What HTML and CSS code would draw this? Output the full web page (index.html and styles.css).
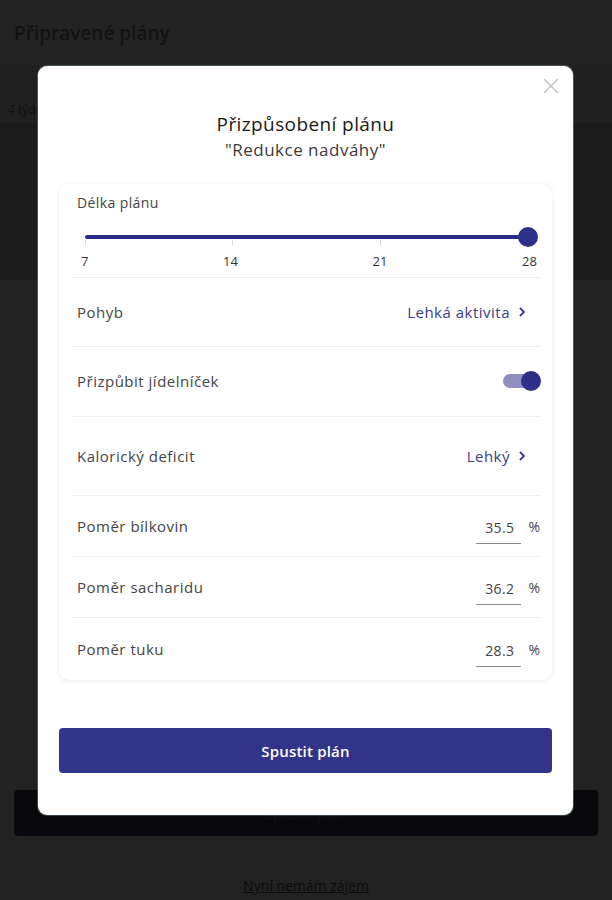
FILE: index.html
```html
<!DOCTYPE html>
<html lang="cs">
<head>
<meta charset="utf-8">
<title>Přizpůsobení plánu</title>
<link rel="stylesheet" href="styles.css">
</head>
<body>
<div class="page">
  <header class="topbar"><h1 class="page-title">Připravené plány</h1></header>
  <div class="tabs"><span class="tab">4 týdny</span></div>
  <div class="hero"></div>
  <main class="content"></main>
  <div class="bottom">
    <div class="dark-btn">Spustit plán</div>
    <a class="link" href="#">Nyní nemám zájem</a>
  </div>
</div>

<div class="modal">
  <button class="close" aria-label="Zavřít">
    <svg width="16" height="16" viewBox="0 0 16 16"><path d="M1 1L15 15M15 1L1 15" stroke="#c4c4c4" stroke-width="1.6" fill="none"/></svg>
  </button>
  <h2 class="modal-title">Přizpůsobení plánu</h2>
  <p class="modal-sub">"Redukce nadváhy"</p>

  <section class="card">
    <div class="slider-block">
      <div class="slider-label">Délka plánu</div>
      <div class="slider">
        <div class="track"></div>
        <div class="ticks">
          <span class="tick"></span><span class="tick"></span><span class="tick"></span><span class="tick"></span>
        </div>
        <div class="thumb"></div>
      </div>
      <div class="slider-values"><span>7</span><span>14</span><span>21</span><span>28</span></div>
    </div>

    <div class="row r-pohyb">
      <span class="label">Pohyb</span>
      <span class="value">Lehká aktivita
        <svg class="chev" width="8" height="12" viewBox="0 0 8 12"><path d="M2 2L6 6L2 10" stroke="#3b3b8e" stroke-width="1.8" fill="none"/></svg>
      </span>
    </div>
    <div class="row r-toggle">
      <span class="label">Přizpůbit jídelníček</span>
      <span class="toggle"><span class="toggle-track"></span><span class="toggle-thumb"></span></span>
    </div>
    <div class="row r-deficit">
      <span class="label">Kalorický deficit</span>
      <span class="value">Lehký
        <svg class="chev" width="8" height="12" viewBox="0 0 8 12"><path d="M2 2L6 6L2 10" stroke="#3b3b8e" stroke-width="1.8" fill="none"/></svg>
      </span>
    </div>
    <div class="row r-num">
      <span class="label">Poměr bílkovin</span>
      <span class="num"><span class="num-input">35.5</span><span class="pct">%</span></span>
    </div>
    <div class="row r-num">
      <span class="label">Poměr sacharidu</span>
      <span class="num"><span class="num-input">36.2</span><span class="pct">%</span></span>
    </div>
    <div class="row r-num last">
      <span class="label">Poměr tuku</span>
      <span class="num"><span class="num-input">28.3</span><span class="pct">%</span></span>
    </div>
  </section>

  <button class="primary">Spustit plán</button>
</div>
</body>
</html>
```
FILE: styles.css
```css
* { box-sizing: border-box; }
html, body { margin: 0; padding: 0; }
body {
  width: 612px;
  height: 900px;
  overflow: hidden;
  background: #222222;
  font-family: "Open Sans", "Noto Sans", sans-serif;
  position: relative;
}
.page { display: flex; flex-direction: column; height: 900px; }
.topbar { height: 65px; background: #232323; display: flex; align-items: center; padding-left: 14px; }
.page-title { margin: 0; font-size: 19px; font-weight: 600; color: #121212; letter-spacing: 0; }
.tabs { height: 58px; background: #202020; display: flex; align-items: center; padding-left: 8px; padding-top: 30px; }
.tab { font-size: 12px; color: #0e0e0e; }
.hero { height: 157px; background: #1b1b1b; }
.content { height: 510px; background: #222222; }
.bottom { height: 110px; background: #222222; display: flex; flex-direction: column; align-items: center; }
.dark-btn { width: 584px; height: 46px; background: #09090d; border-radius: 4px; color: #111; font-size: 15px; display: flex; align-items: center; justify-content: center; }
.link { margin-top: 40px; font-size: 14px; color: #0c0c0c; text-decoration: underline; }

.modal {
  position: absolute;
  left: 38px; top: 66px;
  width: 535px; height: 749px;
  background: #ffffff;
  border-radius: 9px;
  box-shadow: 0 0 0 1px rgba(150,180,200,0.35);
  padding: 45px 21px 0 21px;
  display: flex; flex-direction: column; align-items: stretch;
}
.close { position: absolute; right: 14px; top: 12px; width: 16px; height: 16px; padding: 0; border: none; background: none; }
.modal-title { margin: 0; text-align: center; font-size: 19px; font-weight: 500; color: #1a1a1a; line-height: 26px; letter-spacing: 0.4px; }
.modal-sub { margin: 1px 0 0; text-align: center; font-size: 17px; color: #3a3a3a; line-height: 24px; letter-spacing: 0.5px; }

.card {
  margin-top: 22px;
  background: #fff;
  border-radius: 10px;
  box-shadow: 0 1px 6px rgba(0,0,0,0.08), 0 0 1px rgba(0,0,0,0.06);
  padding: 0 12px 0 13px;
  height: 496px;
  display: flex; flex-direction: column;
}
.slider-block { height: 94px; border-bottom: 1px solid #efefef; padding: 10px 0 0 5px; }
.slider-label { font-size: 14px; color: #444; line-height: 18px; letter-spacing: 0.4px; }
.slider { position: relative; height: 28px; margin: 11px 12px 0 8px; }
.track { position: absolute; left: 0; right: 0; top: 12px; height: 4px; background: #2a2b88; border-radius: 2px; }
.ticks { position: absolute; left: 0; right: 0; top: 17px; display: flex; justify-content: space-between; }
.tick { width: 1px; height: 5px; background: #d6d6d6; }
.thumb { position: absolute; right: -10px; top: 4px; width: 20px; height: 20px; border-radius: 50%; background: #2f3088; }
.slider-values { display: flex; justify-content: space-between; margin: 2px 3px 0 4px; font-size: 13px; color: #333; line-height: 16px; }

.row { display: flex; align-items: center; justify-content: space-between; border-bottom: 1px solid #efefef; padding-left: 5px; }
.row.last { border-bottom: none; }
.r-pohyb { height: 69px; }
.r-toggle { height: 70px; }
.r-deficit { height: 80px; }
.r-num { height: 61px; }
.row.last { height: 62px; }
.label { font-size: 15px; color: #454545; letter-spacing: 0.5px; }
.value { display: flex; align-items: center; gap: 8px; font-size: 15px; color: #3b3b8e; padding-right: 14px; letter-spacing: 0.5px; }
.chev { display: block; }
.toggle { position: relative; width: 38px; height: 20px; margin-right: -1px; }
.toggle-track { position: absolute; left: 0; right: 4px; top: 3px; height: 14px; border-radius: 7px; background: #8e8fbf; }
.toggle-thumb { position: absolute; right: 0; top: 0; width: 20px; height: 20px; border-radius: 50%; background: #2e3088; }
.num { display: flex; align-items: center; }
.num-input { width: 45px; text-align: right; padding: 0 7px 6px 0; margin-top: 10px; border-bottom: 1px solid #8a8a8a; font-size: 14px; color: #444; letter-spacing: 0.4px; }
.pct { font-size: 14px; color: #444; margin-left: 7px; }

.primary {
  margin-top: 48px;
  height: 45px;
  border: none;
  border-radius: 4px;
  background: #32348a;
  color: #fff;
  font-family: "Open Sans", "Noto Sans", sans-serif;
  font-size: 15px;
  font-weight: 600;
  letter-spacing: 0.2px;
}
```
